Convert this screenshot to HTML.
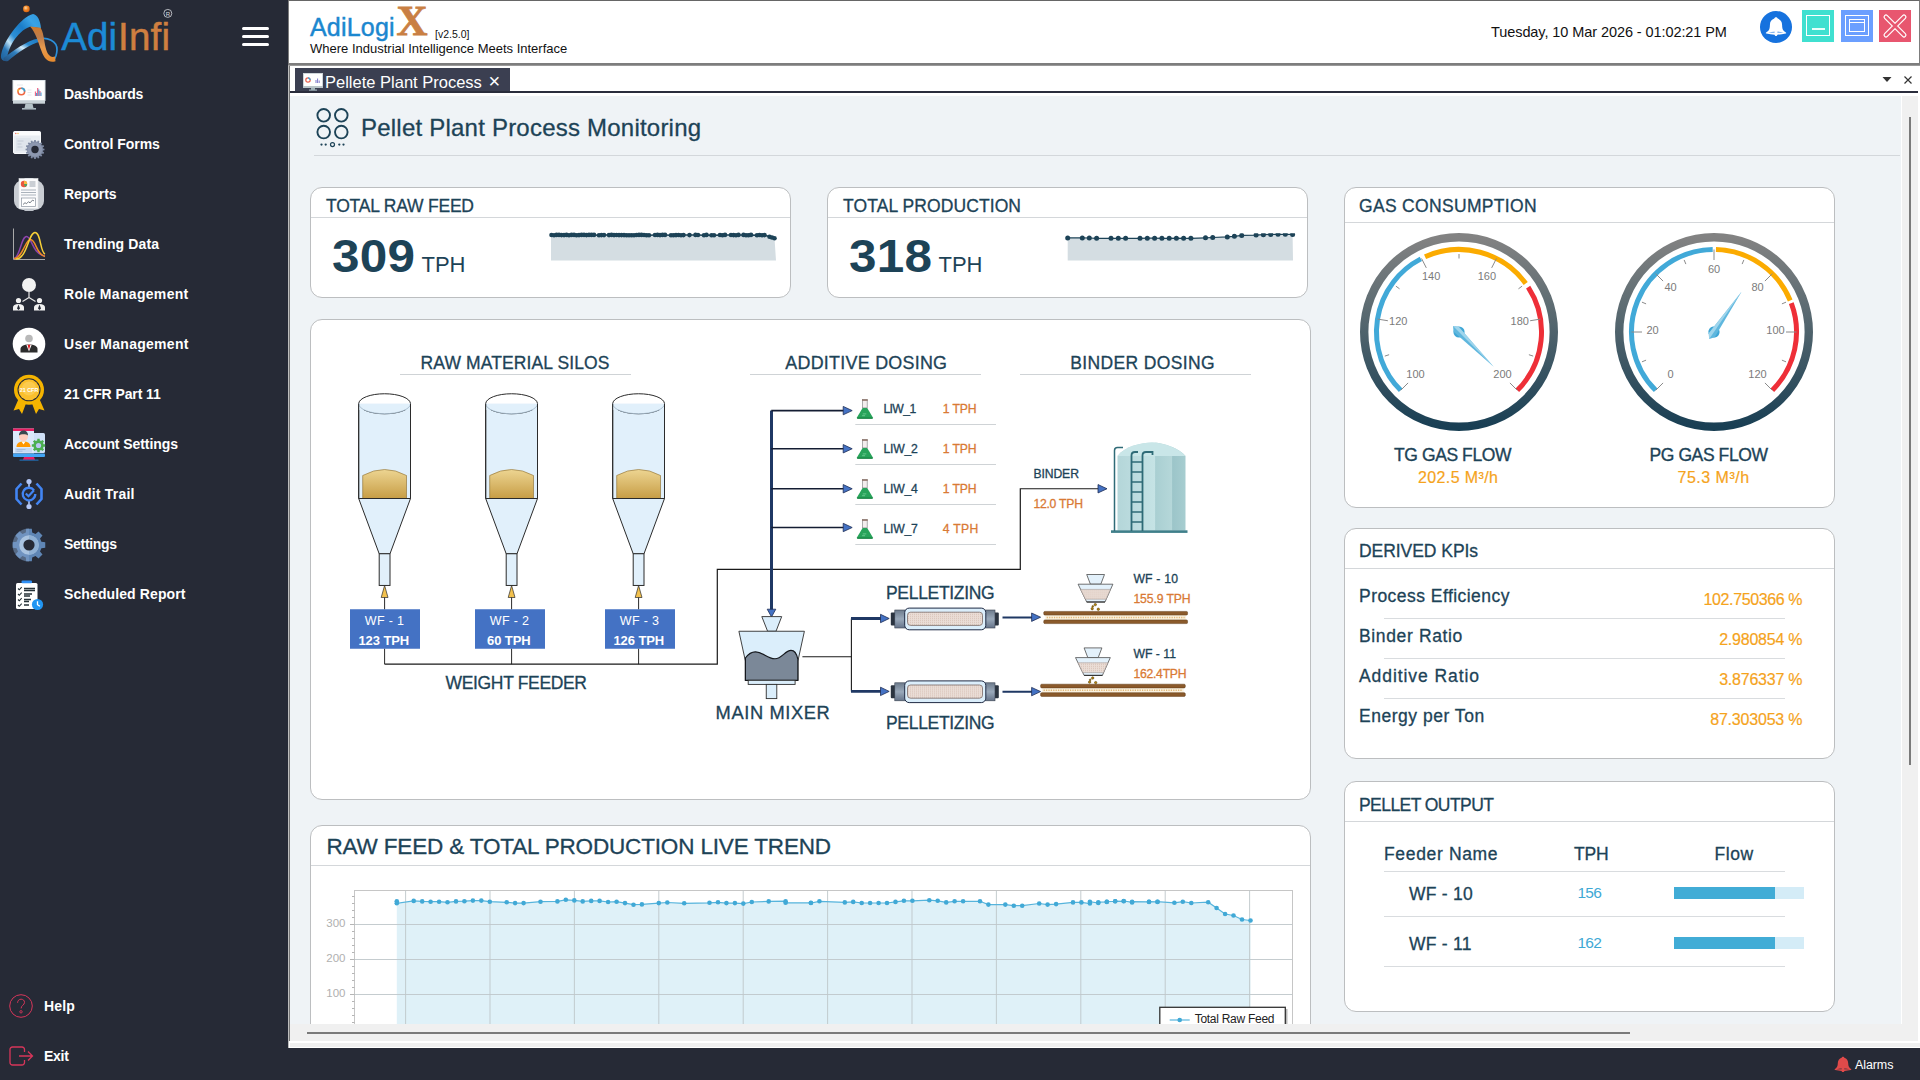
<!DOCTYPE html>
<html lang="en"><head><meta charset="utf-8"><title>AdiLogiX - Pellet Plant Process Monitoring</title>
<style>
*{box-sizing:border-box;margin:0;padding:0}
html,body{width:1920px;height:1080px;overflow:hidden;background:#fff;font-family:"Liberation Sans",sans-serif;color:#1d4357}
div,span,svg{position:absolute}
svg{overflow:visible}
svg text{font-family:"Liberation Sans",sans-serif}
.t{white-space:nowrap;line-height:1}
#side{left:0;top:0;width:288px;height:1080px;background:#262a36}
#status{left:288px;top:1048px;width:1632px;height:32px;background:#262a36}
.mi{left:64px;color:#fff;font-weight:bold;font-size:14px;white-space:nowrap;line-height:1}
#top{left:288px;top:0;width:1632px;height:65px;background:#fff;border:2px solid #7d7d7d;border-right-width:1px;border-left-width:1px;border-top:1px solid #666}
#tabs{left:288px;top:65px;width:1632px;height:983px;background:#fff;border-left:1px solid #bdbdbd;border-top:1px solid #9a9a9a;box-shadow:inset 1px 0 0 #757575}
#tab{left:295px;top:68px;width:215px;height:24px;background:#3b3f51}
#tabline{left:290px;top:91px;width:1628px;height:2px;background:#2a2d3c}
#content{left:290px;top:96px;width:1611px;height:928px;background:#eff3f6;overflow:hidden}
#vsb{left:1902px;top:96px;width:16px;height:946px;background:#f0f0f0}
#hsb{left:290px;top:1024px;width:1612px;height:18px;background:#f0f0f0}
.card{background:#fff;border:1px solid #bcbec0;border-radius:12px}
.ch{left:0;right:0;top:0;border-bottom:1px solid #d4d7da}
.ct{color:#1d4357;white-space:nowrap;line-height:1;-webkit-text-stroke:.3px #1d4357}
.or{color:#d97a35}
.ye{color:#f5a31c}
</style></head><body>

<!-- ============ TAB STRIP + CONTENT ============ -->
<div id="tabs"></div>
<div id="content"></div>

<svg style="left:314px;top:106px" width="38" height="44" viewBox="0 0 38 44">
  <g fill="none" stroke="#1d4357" stroke-width="1.900"><circle cx="9.700" cy="9.300" r="6.300"/><circle cx="27.300" cy="9.300" r="6.300"/><circle cx="9.700" cy="26.100" r="6.300"/><circle cx="27.300" cy="26.100" r="6.300"/></g>
  <circle cx="18.500" cy="38.600" r="2" fill="none" stroke="#1d4357" stroke-width="1.200"/>
  <g fill="#1d4357"><circle cx="7.500" cy="38.600" r="1.150"/><circle cx="11.700" cy="38.600" r="1.150"/><circle cx="25.300" cy="38.600" r="1.150"/><circle cx="29.500" cy="38.600" r="1.150"/></g>
</svg>
<div class="t" style="left:361px;top:115.600px;font-size:24px;color:#1d4357;letter-spacing:.22px;-webkit-text-stroke:.3px #1d4357">Pellet Plant Process Monitoring</div>
<div style="left:314px;top:155px;width:1586px;height:1px;background:#d3d7db"></div>
<div class="card" style="left:310px;top:187px;width:481px;height:111px"><div class="ch" style="height:30px"></div><div class="ct" style="left:15px;top:10px;font-size:17.5px;letter-spacing:-0.21px">TOTAL RAW FEED</div><div class="t" style="left:21px;top:44.900px;font-size:46px;font-weight:bold;color:#1d4357;letter-spacing:.2px;transform:scaleX(1.075);transform-origin:0 0">309</div><div class="t" style="left:110.500px;top:66.300px;font-size:22px;color:#1d4357">TPH</div></div>
<div class="card" style="left:827px;top:187px;width:481px;height:111px"><div class="ch" style="height:30px"></div><div class="ct" style="left:15px;top:10px;font-size:17.5px;letter-spacing:0.09px">TOTAL PRODUCTION</div><div class="t" style="left:21px;top:44.900px;font-size:46px;font-weight:bold;color:#1d4357;letter-spacing:.2px;transform:scaleX(1.075);transform-origin:0 0">318</div><div class="t" style="left:110.500px;top:66.300px;font-size:22px;color:#1d4357">TPH</div></div>
<svg style="left:0;top:0" width="1920" height="1080" viewBox="0 0 1920 1080">
<path d="M551 235 L551.5,235.0 L554.0,235.2 L556.5,234.9 L559.0,234.9 L561.5,235.1 L564.0,235.1 L566.5,234.9 L569.0,235.2 L571.5,234.9 L574.0,234.9 L576.5,235.2 L579.0,235.1 L581.5,234.9 L584.0,234.9 L586.5,235.1 L589.0,234.9 L591.5,234.9 L594.0,234.9 L599.0,235.2 L601.5,235.1 L604.0,235.1 L609.0,235.1 L611.5,234.9 L614.0,235.1 L616.5,235.0 L619.0,235.1 L621.5,235.1 L624.0,235.1 L626.5,235.2 L629.0,235.2 L631.5,235.2 L634.0,235.2 L636.5,235.0 L639.0,234.9 L641.5,234.9 L644.0,235.0 L646.5,235.2 L649.0,235.3 L655.0,235.0 L657.5,234.9 L660.0,235.1 L662.5,234.9 L665.0,234.9 L671.0,235.2 L673.5,235.3 L676.0,235.1 L678.5,235.0 L681.0,235.3 L683.5,235.1 L689.5,235.1 L695.5,234.9 L698.0,235.0 L704.0,235.3 L706.5,234.9 L711.5,235.3 L714.0,235.3 L720.0,235.0 L722.5,235.3 L725.0,234.9 L731.0,235.0 L733.5,235.1 L736.0,235.2 L738.5,234.9 L743.5,234.9 L746.0,235.2 L748.5,235.2 L751.0,234.9 L757.0,235.2 L759.5,235.0 L762.0,235.2 L764.5,235.1 L769.5,236.7 L772.0,237.5 L774.5,238.3 L776 260.600 L551 260.600 Z" fill="#d4dde2"/>
<polyline points="551.5,235.0 554.0,235.2 556.5,234.9 559.0,234.9 561.5,235.1 564.0,235.1 566.5,234.9 569.0,235.2 571.5,234.9 574.0,234.9 576.5,235.2 579.0,235.1 581.5,234.9 584.0,234.9 586.5,235.1 589.0,234.9 591.5,234.9 594.0,234.9 599.0,235.2 601.5,235.1 604.0,235.1 609.0,235.1 611.5,234.9 614.0,235.1 616.5,235.0 619.0,235.1 621.5,235.1 624.0,235.1 626.5,235.2 629.0,235.2 631.5,235.2 634.0,235.2 636.5,235.0 639.0,234.9 641.5,234.9 644.0,235.0 646.5,235.2 649.0,235.3 655.0,235.0 657.5,234.9 660.0,235.1 662.5,234.9 665.0,234.9 671.0,235.2 673.5,235.3 676.0,235.1 678.5,235.0 681.0,235.3 683.5,235.1 689.5,235.1 695.5,234.9 698.0,235.0 704.0,235.3 706.5,234.9 711.5,235.3 714.0,235.3 720.0,235.0 722.5,235.3 725.0,234.9 731.0,235.0 733.5,235.1 736.0,235.2 738.5,234.9 743.5,234.9 746.0,235.2 748.5,235.2 751.0,234.9 757.0,235.2 759.5,235.0 762.0,235.2 764.5,235.1 769.5,236.7 772.0,237.5 774.5,238.3" fill="none" stroke="#1d4357" stroke-width="1.500"/>
<g fill="#1d4357"><circle cx="551.5" cy="235.0" r="2.300"/><circle cx="554.0" cy="235.2" r="2.300"/><circle cx="556.5" cy="234.9" r="2.300"/><circle cx="559.0" cy="234.9" r="2.300"/><circle cx="561.5" cy="235.1" r="2.300"/><circle cx="564.0" cy="235.1" r="2.300"/><circle cx="566.5" cy="234.9" r="2.300"/><circle cx="569.0" cy="235.2" r="2.300"/><circle cx="571.5" cy="234.9" r="2.300"/><circle cx="574.0" cy="234.9" r="2.300"/><circle cx="576.5" cy="235.2" r="2.300"/><circle cx="579.0" cy="235.1" r="2.300"/><circle cx="581.5" cy="234.9" r="2.300"/><circle cx="584.0" cy="234.9" r="2.300"/><circle cx="586.5" cy="235.1" r="2.300"/><circle cx="589.0" cy="234.9" r="2.300"/><circle cx="591.5" cy="234.9" r="2.300"/><circle cx="594.0" cy="234.9" r="2.300"/><circle cx="599.0" cy="235.2" r="2.300"/><circle cx="601.5" cy="235.1" r="2.300"/><circle cx="604.0" cy="235.1" r="2.300"/><circle cx="609.0" cy="235.1" r="2.300"/><circle cx="611.5" cy="234.9" r="2.300"/><circle cx="614.0" cy="235.1" r="2.300"/><circle cx="616.5" cy="235.0" r="2.300"/><circle cx="619.0" cy="235.1" r="2.300"/><circle cx="621.5" cy="235.1" r="2.300"/><circle cx="624.0" cy="235.1" r="2.300"/><circle cx="626.5" cy="235.2" r="2.300"/><circle cx="629.0" cy="235.2" r="2.300"/><circle cx="631.5" cy="235.2" r="2.300"/><circle cx="634.0" cy="235.2" r="2.300"/><circle cx="636.5" cy="235.0" r="2.300"/><circle cx="639.0" cy="234.9" r="2.300"/><circle cx="641.5" cy="234.9" r="2.300"/><circle cx="644.0" cy="235.0" r="2.300"/><circle cx="646.5" cy="235.2" r="2.300"/><circle cx="649.0" cy="235.3" r="2.300"/><circle cx="655.0" cy="235.0" r="2.300"/><circle cx="657.5" cy="234.9" r="2.300"/><circle cx="660.0" cy="235.1" r="2.300"/><circle cx="662.5" cy="234.9" r="2.300"/><circle cx="665.0" cy="234.9" r="2.300"/><circle cx="671.0" cy="235.2" r="2.300"/><circle cx="673.5" cy="235.3" r="2.300"/><circle cx="676.0" cy="235.1" r="2.300"/><circle cx="678.5" cy="235.0" r="2.300"/><circle cx="681.0" cy="235.3" r="2.300"/><circle cx="683.5" cy="235.1" r="2.300"/><circle cx="689.5" cy="235.1" r="2.300"/><circle cx="695.5" cy="234.9" r="2.300"/><circle cx="698.0" cy="235.0" r="2.300"/><circle cx="704.0" cy="235.3" r="2.300"/><circle cx="706.5" cy="234.9" r="2.300"/><circle cx="711.5" cy="235.3" r="2.300"/><circle cx="714.0" cy="235.3" r="2.300"/><circle cx="720.0" cy="235.0" r="2.300"/><circle cx="722.5" cy="235.3" r="2.300"/><circle cx="725.0" cy="234.9" r="2.300"/><circle cx="731.0" cy="235.0" r="2.300"/><circle cx="733.5" cy="235.1" r="2.300"/><circle cx="736.0" cy="235.2" r="2.300"/><circle cx="738.5" cy="234.9" r="2.300"/><circle cx="743.5" cy="234.9" r="2.300"/><circle cx="746.0" cy="235.2" r="2.300"/><circle cx="748.5" cy="235.2" r="2.300"/><circle cx="751.0" cy="234.9" r="2.300"/><circle cx="757.0" cy="235.2" r="2.300"/><circle cx="759.5" cy="235.0" r="2.300"/><circle cx="762.0" cy="235.2" r="2.300"/><circle cx="764.5" cy="235.1" r="2.300"/><circle cx="769.5" cy="236.7" r="2.300"/><circle cx="772.0" cy="237.5" r="2.300"/><circle cx="774.5" cy="238.3" r="2.300"/></g>
<clipPath id="cp2"><rect x="1060" y="233.200" width="240" height="40"/></clipPath>
<g clip-path="url(#cp2)"><path d="M1067.7,237.9 L1082.3,237.9 L1089.3,238.0 L1096.6,238.3 L1111.0,238.3 L1118.3,238.3 L1125.6,238.3 L1140.0,238.3 L1147.3,238.2 L1154.6,238.2 L1161.9,238.3 L1169.2,238.3 L1176.4,238.2 L1183.6,238.3 L1190.9,238.3 L1205.5,237.8 L1212.7,237.5 L1227.3,236.9 L1234.4,236.3 L1241.7,235.4 L1256.1,235.1 L1263.4,234.7 L1270.7,234.4 L1278.0,234.3 L1285.3,234.3 L1292.6,234.4 L1293 260.600 L1067.700 260.600 Z" fill="#d4dde2"/>
<polyline points="1067.7,237.9 1082.3,237.9 1089.3,238.0 1096.6,238.3 1111.0,238.3 1118.3,238.3 1125.6,238.3 1140.0,238.3 1147.3,238.2 1154.6,238.2 1161.9,238.3 1169.2,238.3 1176.4,238.2 1183.6,238.3 1190.9,238.3 1205.5,237.8 1212.7,237.5 1227.3,236.9 1234.4,236.3 1241.7,235.4 1256.1,235.1 1263.4,234.7 1270.7,234.4 1278.0,234.3 1285.3,234.3 1292.6,234.4" fill="none" stroke="#1d4357" stroke-width="1.200"/>
<g fill="#1d4357"><circle cx="1067.7" cy="237.9" r="2.500"/><circle cx="1082.3" cy="237.9" r="2.500"/><circle cx="1089.3" cy="238.0" r="2.500"/><circle cx="1096.6" cy="238.3" r="2.500"/><circle cx="1111.0" cy="238.3" r="2.500"/><circle cx="1118.3" cy="238.3" r="2.500"/><circle cx="1125.6" cy="238.3" r="2.500"/><circle cx="1140.0" cy="238.3" r="2.500"/><circle cx="1147.3" cy="238.2" r="2.500"/><circle cx="1154.6" cy="238.2" r="2.500"/><circle cx="1161.9" cy="238.3" r="2.500"/><circle cx="1169.2" cy="238.3" r="2.500"/><circle cx="1176.4" cy="238.2" r="2.500"/><circle cx="1183.6" cy="238.3" r="2.500"/><circle cx="1190.9" cy="238.3" r="2.500"/><circle cx="1205.5" cy="237.8" r="2.500"/><circle cx="1212.7" cy="237.5" r="2.500"/><circle cx="1227.3" cy="236.9" r="2.500"/><circle cx="1234.4" cy="236.3" r="2.500"/><circle cx="1241.7" cy="235.4" r="2.500"/><circle cx="1256.1" cy="235.1" r="2.500"/><circle cx="1263.4" cy="234.7" r="2.500"/><circle cx="1270.7" cy="234.4" r="2.500"/><circle cx="1278.0" cy="234.3" r="2.500"/><circle cx="1285.3" cy="234.3" r="2.500"/><circle cx="1292.6" cy="234.4" r="2.500"/></g></g>
</svg>
<div class="card" style="left:310px;top:319px;width:1001px;height:481px"></div>
<svg style="left:0;top:0" width="1920" height="1080" viewBox="0 0 1920 1080">
<defs>
<linearGradient id="mat" x1="0" y1="0" x2="0" y2="1"><stop offset="0" stop-color="#edd592"/><stop offset="1" stop-color="#c79d45"/></linearGradient>
<linearGradient id="capg" x1="0" y1="0" x2="0" y2="1"><stop offset="0" stop-color="#6d7b8c"/><stop offset=".5" stop-color="#9aa9ba"/><stop offset="1" stop-color="#66748a"/></linearGradient>
<pattern id="hatch" width="2" height="2" patternUnits="userSpaceOnUse"><rect width="2" height="2" fill="#eaddd6"/><rect width="1" height="1" fill="#d9c3b8"/></pattern>
<pattern id="belt" width="3" height="3" patternUnits="userSpaceOnUse"><rect width="3" height="3" fill="#f6ead2"/><rect width="1.500" height="1.500" fill="#dcbf8d"/></pattern>
<linearGradient id="tank" x1="0" y1="0" x2="1" y2="0"><stop offset="0" stop-color="#b4d6d9"/><stop offset=".55" stop-color="#c5e3e5"/><stop offset=".56" stop-color="#a9cfd2"/><stop offset=".8" stop-color="#b5d7d9"/><stop offset=".81" stop-color="#9cc5c9"/><stop offset="1" stop-color="#a7cdd0"/></linearGradient>
</defs>
<text x="420.5" y="368.8" font-size="17.500" fill="#1d4357" stroke="#1d4357" stroke-width=".3" textLength="189.0" lengthAdjust="spacing">RAW MATERIAL SILOS</text>
<rect x="400" y="374" width="231.0" height="1" fill="#cfd3d6"/>
<text x="785.3" y="368.8" font-size="17.900" fill="#1d4357" stroke="#1d4357" stroke-width=".3" textLength="161.7" lengthAdjust="spacing">ADDITIVE DOSING</text>
<rect x="750" y="374" width="231.0" height="1" fill="#cfd3d6"/>
<text x="1070.3" y="368.8" font-size="17.500" fill="#1d4357" stroke="#1d4357" stroke-width=".3" textLength="144.4" lengthAdjust="spacing">BINDER DOSING</text>
<rect x="1020" y="374" width="231.0" height="1" fill="#cfd3d6"/>
<text x="445.5" y="688.8" font-size="17.500" fill="#1d4357" stroke="#1d4357" stroke-width=".3" textLength="141.5" lengthAdjust="spacing">WEIGHT FEEDER</text>
<text x="715.6" y="718.8" font-size="18.300" fill="#1d4357" stroke="#1d4357" stroke-width=".3" textLength="114.1" lengthAdjust="spacing">MAIN MIXER</text>
<text x="886" y="599" font-size="17.500" fill="#1d4357" stroke="#1d4357" stroke-width=".3" textLength="108.7" lengthAdjust="spacing">PELLETIZING</text>
<text x="886" y="729" font-size="17.500" fill="#1d4357" stroke="#1d4357" stroke-width=".3" textLength="108.7" lengthAdjust="spacing">PELLETIZING</text>
<g stroke="#2b2b2b" stroke-width="1">
<path d="M358.70000000000005 403.750V498.500H410.5V403.750Z" fill="#e1f0fb"/>
<ellipse cx="384.6" cy="403.750" rx="25.900" ry="10" fill="#fff"/>
<path d="M358.70000000000005 403.750V410H410.5V403.750" fill="#e1f0fb" stroke="none"/>
<path d="M358.70000000000005 403.750A25.900 10 0 0 0 410.5 403.750" fill="#e1f0fb" stroke="#9db3c4" stroke-width=".8"/>
<path d="M358.70000000000005 403.750V498.500M410.5 403.750V498.500" fill="none"/>
<path d="M362.70000000000005 498.500V475.500Q384.6 463.500 406.5 475.500V498.500Z" fill="url(#mat)" stroke="#8a6a2a" stroke-width=".6"/>
<path d="M358.70000000000005 498.500H410.5L390.0 553.750H379.20000000000005Z" fill="#e1f0fb"/>
<rect x="379.20000000000005" y="553.750" width="10.800" height="31.700" fill="#e1f0fb"/>
<path d="M384.6 585.500L388.0 597.500H381.20000000000005Z" fill="#f2c14e" stroke-width=".7"/>
<path d="M384.6 597.500V609.500M384.6 648.500V664.200" fill="none"/>
</g>
<g stroke="#2b2b2b" stroke-width="1">
<path d="M485.70000000000005 403.750V498.500H537.5V403.750Z" fill="#e1f0fb"/>
<ellipse cx="511.6" cy="403.750" rx="25.900" ry="10" fill="#fff"/>
<path d="M485.70000000000005 403.750V410H537.5V403.750" fill="#e1f0fb" stroke="none"/>
<path d="M485.70000000000005 403.750A25.900 10 0 0 0 537.5 403.750" fill="#e1f0fb" stroke="#9db3c4" stroke-width=".8"/>
<path d="M485.70000000000005 403.750V498.500M537.5 403.750V498.500" fill="none"/>
<path d="M489.70000000000005 498.500V475.500Q511.6 463.500 533.5 475.500V498.500Z" fill="url(#mat)" stroke="#8a6a2a" stroke-width=".6"/>
<path d="M485.70000000000005 498.500H537.5L517.0 553.750H506.20000000000005Z" fill="#e1f0fb"/>
<rect x="506.20000000000005" y="553.750" width="10.800" height="31.700" fill="#e1f0fb"/>
<path d="M511.6 585.500L515.0 597.500H508.20000000000005Z" fill="#f2c14e" stroke-width=".7"/>
<path d="M511.6 597.500V609.500M511.6 648.500V664.200" fill="none"/>
</g>
<g stroke="#2b2b2b" stroke-width="1">
<path d="M612.7 403.750V498.500H664.5V403.750Z" fill="#e1f0fb"/>
<ellipse cx="638.6" cy="403.750" rx="25.900" ry="10" fill="#fff"/>
<path d="M612.7 403.750V410H664.5V403.750" fill="#e1f0fb" stroke="none"/>
<path d="M612.7 403.750A25.900 10 0 0 0 664.5 403.750" fill="#e1f0fb" stroke="#9db3c4" stroke-width=".8"/>
<path d="M612.7 403.750V498.500M664.5 403.750V498.500" fill="none"/>
<path d="M616.7 498.500V475.500Q638.6 463.500 660.5 475.500V498.500Z" fill="url(#mat)" stroke="#8a6a2a" stroke-width=".6"/>
<path d="M612.7 498.500H664.5L644.0 553.750H633.2Z" fill="#e1f0fb"/>
<rect x="633.2" y="553.750" width="10.800" height="31.700" fill="#e1f0fb"/>
<path d="M638.6 585.500L642.0 597.500H635.2Z" fill="#f2c14e" stroke-width=".7"/>
<path d="M638.6 597.500V609.500M638.6 648.500V664.200" fill="none"/>
</g>
<rect x="350" y="609.250" width="70" height="39.500" fill="#4472c4"/>
<text x="384.5" y="625" font-size="12.500" fill="#fff" text-anchor="middle" letter-spacing=".3">WF - 1</text>
<text x="383.8" y="645" font-size="13" font-weight="bold" fill="#fff" text-anchor="middle" letter-spacing="-.1">123 TPH</text>
<rect x="475" y="609.250" width="70" height="39.500" fill="#4472c4"/>
<text x="509.5" y="625" font-size="12.500" fill="#fff" text-anchor="middle" letter-spacing=".3">WF - 2</text>
<text x="508.8" y="645" font-size="13" font-weight="bold" fill="#fff" text-anchor="middle" letter-spacing="-.1">60 TPH</text>
<rect x="605" y="609.250" width="70" height="39.500" fill="#4472c4"/>
<text x="639.5" y="625" font-size="12.500" fill="#fff" text-anchor="middle" letter-spacing=".3">WF - 3</text>
<text x="638.8" y="645" font-size="13" font-weight="bold" fill="#fff" text-anchor="middle" letter-spacing="-.1">126 TPH</text>
<path d="M384.600 664.200H717.300V569.400H1020.300V488.750H1099" fill="none" stroke="#1a1a1a" stroke-width="1.200"/>
<path d="M771.500 410.600V610" fill="none" stroke="#1f3864" stroke-width="3"/>
<path d="M771.250 410.6H844" fill="none" stroke="#141d33" stroke-width="1.600"/>
<path d="M852.2 410.6L843.2 406.40000000000003V414.8Z" fill="#4472c4" stroke="#1f2f55" stroke-width=".8"/>
<path d="M771.250 448.75H844" fill="none" stroke="#141d33" stroke-width="1.600"/>
<path d="M852.2 448.75L843.2 444.55V452.95Z" fill="#4472c4" stroke="#1f2f55" stroke-width=".8"/>
<path d="M771.250 488.75H844" fill="none" stroke="#141d33" stroke-width="1.600"/>
<path d="M852.2 488.75L843.2 484.55V492.95Z" fill="#4472c4" stroke="#1f2f55" stroke-width=".8"/>
<path d="M771.250 527.5H844" fill="none" stroke="#141d33" stroke-width="1.600"/>
<path d="M852.2 527.5L843.2 523.3V531.7Z" fill="#4472c4" stroke="#1f2f55" stroke-width=".8"/>
<path d="M771.500 616.900L767.200 609.200H775.800Z" fill="#4472c4" stroke="#1f2f55" stroke-width=".8"/>
<path d="M1107 488.75L1098.0 484.55V492.95Z" fill="#4472c4" stroke="#1f2f55" stroke-width=".8"/>
<g transform="translate(856.300 399.4)"><rect x="6.300" y="0" width="4.600" height="8.500" fill="#f3eeee" stroke="#8b8b8b" stroke-width=".7"/><rect x="5.800" y="0" width="5.600" height="1.400" fill="#8d6e63"/><path d="M6.300 8.500L.6 18.200Q.2 19.400 1.500 19.400H15.700Q17 19.400 16.600 18.200L10.900 8.500Z" fill="#27a35a"/><path d="M1 18.700H16.200" stroke="#157a3e" stroke-width="1"/><path d="M6.500 14.500h3.500M5.800 16.300h3" stroke="#7fd6a0" stroke-width=".7"/></g>
<text x="883.400" y="413.4" font-size="12.2" fill="#1d4357" stroke="#1d4357" stroke-width=".3" letter-spacing="-0.61">LIW_1</text>
<text x="942.800" y="413.4" font-size="12.2" fill="#d97a35" stroke="#d97a35" stroke-width=".3" letter-spacing="-0.14">1 TPH</text>
<rect x="855.300" y="424" width="140.700" height="1" fill="#cfd3d6"/>
<g transform="translate(856.300 439.4)"><rect x="6.300" y="0" width="4.600" height="8.500" fill="#f3eeee" stroke="#8b8b8b" stroke-width=".7"/><rect x="5.800" y="0" width="5.600" height="1.400" fill="#8d6e63"/><path d="M6.300 8.500L.6 18.200Q.2 19.400 1.500 19.400H15.700Q17 19.400 16.600 18.200L10.900 8.500Z" fill="#27a35a"/><path d="M1 18.700H16.200" stroke="#157a3e" stroke-width="1"/><path d="M6.500 14.500h3.500M5.800 16.300h3" stroke="#7fd6a0" stroke-width=".7"/></g>
<text x="883.400" y="453.4" font-size="12.2" fill="#1d4357" stroke="#1d4357" stroke-width=".3" letter-spacing="-0.19">LIW_2</text>
<text x="942.800" y="453.4" font-size="12.2" fill="#d97a35" stroke="#d97a35" stroke-width=".3" letter-spacing="-0.14">1 TPH</text>
<rect x="855.300" y="464" width="140.700" height="1" fill="#cfd3d6"/>
<g transform="translate(856.300 479.4)"><rect x="6.300" y="0" width="4.600" height="8.500" fill="#f3eeee" stroke="#8b8b8b" stroke-width=".7"/><rect x="5.800" y="0" width="5.600" height="1.400" fill="#8d6e63"/><path d="M6.300 8.500L.6 18.200Q.2 19.400 1.500 19.400H15.700Q17 19.400 16.600 18.200L10.900 8.500Z" fill="#27a35a"/><path d="M1 18.700H16.200" stroke="#157a3e" stroke-width="1"/><path d="M6.500 14.500h3.500M5.800 16.300h3" stroke="#7fd6a0" stroke-width=".7"/></g>
<text x="883.400" y="493.4" font-size="12.2" fill="#1d4357" stroke="#1d4357" stroke-width=".3" letter-spacing="-0.19">LIW_4</text>
<text x="942.800" y="493.4" font-size="12.2" fill="#d97a35" stroke="#d97a35" stroke-width=".3" letter-spacing="-0.14">1 TPH</text>
<rect x="855.300" y="504" width="140.700" height="1" fill="#cfd3d6"/>
<g transform="translate(856.300 519.4)"><rect x="6.300" y="0" width="4.600" height="8.500" fill="#f3eeee" stroke="#8b8b8b" stroke-width=".7"/><rect x="5.800" y="0" width="5.600" height="1.400" fill="#8d6e63"/><path d="M6.300 8.500L.6 18.200Q.2 19.400 1.500 19.400H15.700Q17 19.400 16.600 18.200L10.900 8.500Z" fill="#27a35a"/><path d="M1 18.700H16.200" stroke="#157a3e" stroke-width="1"/><path d="M6.500 14.500h3.500M5.800 16.300h3" stroke="#7fd6a0" stroke-width=".7"/></g>
<text x="883.400" y="533.4" font-size="12.2" fill="#1d4357" stroke="#1d4357" stroke-width=".3" letter-spacing="-0.19">LIW_7</text>
<text x="942.800" y="533.4" font-size="12.2" fill="#d97a35" stroke="#d97a35" stroke-width=".3" letter-spacing="0.31">4 TPH</text>
<rect x="855.300" y="544" width="140.700" height="1" fill="#cfd3d6"/>
<text x="1033.400" y="477.800" font-size="12.2" fill="#1d4357" stroke="#1d4357" stroke-width=".3" letter-spacing="-0.10">BINDER</text>
<text x="1033.400" y="508" font-size="12.2" fill="#d97a35" stroke="#d97a35" stroke-width=".3" letter-spacing="-0.24">12.0 TPH</text>
<g>
<path d="M1117.500 456C1125 446 1142 442.500 1152 442.500C1165 442.500 1180 449 1185.500 456V530.500H1117.500Z" fill="url(#tank)"/>
<path d="M1117.500 456C1125 446 1142 442.500 1152 442.500C1165 442.500 1180 449 1185.500 456Z" fill="#c9e6e8"/>
<rect x="1111" y="530.300" width="76.500" height="2.600" fill="#3f7f8a"/>
<path d="M1114.500 531V450.500Q1114.500 447.500 1117.500 447.500H1123" fill="none" stroke="#2f6b77" stroke-width="1.500"/>
<path d="M1131.500 531V455.500Q1131.500 452 1135 452H1138M1142.500 531V455.500Q1142.500 452 1146 452H1152.500V455" fill="none" stroke="#2f6b77" stroke-width="1.800"/>
<path d="M1131.500 462H1142.500M1131.500 472H1142.500M1131.500 482H1142.500M1131.500 492H1142.500M1131.500 502H1142.500M1131.500 512H1142.500M1131.500 522H1142.500" stroke="#2f6b77" stroke-width="1.600"/>
</g>
<g stroke="#2e2e2e" stroke-width=".9">
<path d="M761.800 616.600H781.700L776 631.250H767.600Z" fill="#dbeefb"/>
<path d="M738.900 631.250H804.400L797.900 661V680.300H745.400V661Z" fill="#dbeefb"/>
<path d="M745.400 658C749 653 752 651.800 755.500 651.800C763 651.800 767 658.750 775 658.750C782 658.750 785 650.400 791 650.400C795 650.400 797 655 797.900 659.400V680.300H745.400Z" fill="#7b8898" stroke="#15181d" stroke-width="1.200"/>
<rect x="748.200" y="680.300" width="46.900" height="4.100" fill="#dbeefb"/>
<rect x="766.250" y="684.400" width="10.550" height="14.200" fill="#dbeefb"/>
</g>
<path d="M802.400 656.700H851.400" fill="none" stroke="#1a1a1a" stroke-width="1.100"/>
<path d="M851.400 618.500V691.400" fill="none" stroke="#1a1a1a" stroke-width="1.100"/><path d="M851 618.500H881M851 691.400H881" fill="none" stroke="#1f3864" stroke-width="2.800"/>
<path d="M889.200 618.500L880.500 614.300V622.700Z" fill="#4472c4" stroke="#1f2f55" stroke-width=".8"/>
<path d="M889.200 691.400L880.500 687.200V695.600Z" fill="#4472c4" stroke="#1f2f55" stroke-width=".8"/>
<g transform="translate(0 607.8)"><rect x="890.800" y="4.700" width="5" height="13" rx="1" fill="#2b3440"/><rect x="993.800" y="4.700" width="5" height="13" rx="1" fill="#2b3440"/><rect x="894.800" y="2.200" width="11" height="18" fill="url(#capg)" stroke="#39424f" stroke-width=".6"/><rect x="984.500" y="2.200" width="10.500" height="18" fill="url(#capg)" stroke="#39424f" stroke-width=".6"/><rect x="904.700" y=".3" width="81.100" height="21.700" rx="4.500" fill="#dbeefb" stroke="#1f2a44" stroke-width="1"/><rect x="907.500" y="4.400" width="75" height="13.200" rx="3" fill="url(#hatch)" stroke="#7a6a66" stroke-width=".8"/></g>
<g transform="translate(0 680.6)"><rect x="890.800" y="4.700" width="5" height="13" rx="1" fill="#2b3440"/><rect x="993.800" y="4.700" width="5" height="13" rx="1" fill="#2b3440"/><rect x="894.800" y="2.200" width="11" height="18" fill="url(#capg)" stroke="#39424f" stroke-width=".6"/><rect x="984.500" y="2.200" width="10.500" height="18" fill="url(#capg)" stroke="#39424f" stroke-width=".6"/><rect x="904.700" y=".3" width="81.100" height="21.700" rx="4.500" fill="#dbeefb" stroke="#1f2a44" stroke-width="1"/><rect x="907.500" y="4.400" width="75" height="13.200" rx="3" fill="url(#hatch)" stroke="#7a6a66" stroke-width=".8"/></g>
<path d="M1002.500 617.400H1032M1002.500 691.700H1032" fill="none" stroke="#1f3864" stroke-width="2"/>
<path d="M1040.6 617.2L1031.6 613.0V621.4000000000001Z" fill="#4472c4" stroke="#1f2f55" stroke-width=".8"/>
<path d="M1040.6 691.6L1031.6 687.4V695.8000000000001Z" fill="#4472c4" stroke="#1f2f55" stroke-width=".8"/>
<rect x="1045.35" y="614.6" width="140.6" height="6" fill="#fbf2df"/><path d="M1046.75 617.5H1184.55" stroke="#e2b777" stroke-width="1.600" stroke-dasharray="1.200 1.200"/><rect x="1043.75" y="611.4" width="143.8" height="3.700" rx="1.200" fill="#8b5a2b" stroke="#5e3a17" stroke-width=".5"/><rect x="1043.75" y="619.9" width="143.8" height="3.700" rx="1.200" fill="#8b5a2b" stroke="#5e3a17" stroke-width=".5"/>
<rect x="1042.1999999999998" y="687.4" width="141.5" height="6" fill="#fbf2df"/><path d="M1043.6 690.3H1182.3" stroke="#e2b777" stroke-width="1.600" stroke-dasharray="1.200 1.200"/><rect x="1040.6" y="684.1999999999999" width="144.7" height="3.700" rx="1.200" fill="#8b5a2b" stroke="#5e3a17" stroke-width=".5"/><rect x="1040.6" y="692.6999999999999" width="144.7" height="3.700" rx="1.200" fill="#8b5a2b" stroke="#5e3a17" stroke-width=".5"/>
<g transform="translate(1095.6 574.4)" stroke="#4d4d4d" stroke-width=".8"><path d="M-8.900 .1H8.900L5.200 9.800H-5.200Z" fill="#e3f1fb"/><path d="M-17.500 9.800H17.300L9.400 27.600H-8.900Z" fill="#e3f1fb"/><path d="M-15 15H14.800L10.500 24.800H-10.200Z" fill="url(#hatch)" stroke="#9a8f8a" stroke-width=".5"/><path d="M-8.900 27.600H9.400" stroke="#333" stroke-width="1.100"/><g fill="#b8860b" stroke="#4a3500" stroke-width=".5"><circle cx="-.3" cy="30.200" r="1.200"/><circle cx="-3.400" cy="34.300" r="1.200"/><circle cx="2.700" cy="34.800" r="1.200"/><circle cx="-2.800" cy="32" r=".9"/></g></g>
<g transform="translate(1093 647.8)" stroke="#4d4d4d" stroke-width=".8"><path d="M-8.900 .1H8.900L5.200 9.800H-5.200Z" fill="#e3f1fb"/><path d="M-17.500 9.800H17.300L9.400 27.600H-8.900Z" fill="#e3f1fb"/><path d="M-15 15H14.800L10.500 24.800H-10.200Z" fill="url(#hatch)" stroke="#9a8f8a" stroke-width=".5"/><path d="M-8.900 27.600H9.400" stroke="#333" stroke-width="1.100"/><g fill="#b8860b" stroke="#4a3500" stroke-width=".5"><circle cx="-.3" cy="30.200" r="1.200"/><circle cx="-3.400" cy="34.300" r="1.200"/><circle cx="2.700" cy="34.800" r="1.200"/><circle cx="-2.800" cy="32" r=".9"/></g></g>
<text x="1133.400" y="583.400" font-size="12.2" fill="#1d4357" stroke="#1d4357" stroke-width=".3" letter-spacing="0.20">WF - 10</text>
<text x="1133.400" y="603" font-size="12.2" fill="#d97a35" stroke="#d97a35" stroke-width=".3" letter-spacing="-0.11">155.9 TPH</text>
<text x="1133.400" y="658.400" font-size="12.2" fill="#1d4357" stroke="#1d4357" stroke-width=".3" letter-spacing="0.02">WF - 11</text>
<text x="1133.400" y="678" font-size="12.2" fill="#d97a35" stroke="#d97a35" stroke-width=".3" letter-spacing="-0.25">162.4TPH</text>
</svg>

<div class="card" style="left:310px;top:825px;width:1001px;height:260px"><div class="ch" style="height:40px"></div><div class="ct" style="left:15.5px;top:10.2px;font-size:22.5px;letter-spacing:-0.16px">RAW FEED &amp; TOTAL PRODUCTION LIVE TREND</div></div>
<svg style="left:0;top:0" width="1920" height="1080" viewBox="0 0 1920 1080">
<rect x="354.500" y="890.500" width="938" height="140" fill="#fff" stroke="#c6c6c6" stroke-width="1"/>
<path d="M396.8 1030 L396.8 901.2 L396.8 903.3 L413.7 900.9 L422.2 901.4 L430.6 901.7 L439.1 901.7 L447.5 902.3 L456.0 901.4 L464.4 901.2 L472.9 900.6 L481.3 900.6 L489.8 901.7 L506.7 902.3 L515.1 903.1 L523.6 903.1 L540.5 901.7 L557.4 901.4 L565.8 899.8 L574.3 900.4 L582.7 901.4 L591.2 900.9 L599.6 900.9 L608.1 902.0 L616.6 901.7 L625.0 903.1 L633.5 904.7 L641.9 904.4 L658.8 903.1 L667.3 902.5 L684.2 903.3 L709.5 902.8 L718.0 902.3 L726.4 903.1 L734.9 903.1 L743.3 903.6 L751.8 902.0 L768.7 901.4 L785.6 901.2 L785.6 902.8 L810.9 902.8 L810.9 903.0 L819.4 901.3 L844.8 902.4 L853.2 901.9 L861.7 903.0 L870.1 903.0 L878.6 903.0 L887.0 903.0 L895.5 901.9 L903.9 900.8 L912.4 900.8 L929.3 900.2 L937.7 900.8 L946.2 902.4 L954.6 901.3 L963.1 901.3 L980.0 901.3 L988.4 904.6 L1005.3 904.6 L1013.8 905.7 L1022.2 905.7 L1039.2 903.5 L1047.6 904.6 L1056.1 904.1 L1073.0 902.4 L1081.4 902.4 L1089.9 903.5 L1089.9 901.7 L1098.3 903.0 L1098.3 902.2 L1106.8 901.9 L1106.8 901.7 L1115.2 901.3 L1115.2 901.2 L1123.7 901.3 L1123.7 901.0 L1132.1 902.4 L1132.1 901.7 L1149.0 901.9 L1149.0 901.7 L1157.5 901.9 L1157.5 901.7 L1174.4 902.8 L1182.8 901.7 L1191.3 903.0 L1208.2 902.2 L1216.6 908.0 L1225.1 914.0 L1233.5 915.5 L1242.0 919.5 L1250.5 920.5 L1250.5 1030Z" fill="#dff1f8"/>
<path d="M405.6 890.500V1030M490.0 890.500V1030M574.4 890.500V1030M658.8 890.500V1030M743.2 890.500V1030M827.6 890.500V1030M912.0 890.500V1030M996.4 890.500V1030M1080.8 890.500V1030M1165.2 890.500V1030M1249.6 890.500V1030M354.500 924.5H1292.500M354.500 959.5H1292.500M354.500 994.5H1292.500" stroke="#bfc7ca" stroke-width="1" fill="none" opacity=".9"/>
<path d="M350 1029.5H354.500M352 1022.5H354.500M352 1015.5H354.500M352 1008.5H354.500M352 1001.5H354.500M350 994.5H354.500M352 987.5H354.500M352 980.5H354.500M352 973.5H354.500M352 966.5H354.500M350 959.5H354.500M352 952.5H354.500M352 945.5H354.500M352 938.5H354.500M352 931.5H354.500M350 924.5H354.500M352 917.5H354.500M352 910.5H354.500M352 903.5H354.500M352 896.5H354.500" stroke="#b5b5b5" stroke-width="1" fill="none"/>
<text x="345.500" y="927.4" font-size="11.500" fill="#b0b0b0" text-anchor="end">300</text>
<text x="345.500" y="962.4" font-size="11.500" fill="#b0b0b0" text-anchor="end">200</text>
<text x="345.500" y="997.4" font-size="11.500" fill="#b0b0b0" text-anchor="end">100</text>
<polyline points="396.8,901.2 396.8,903.3 413.7,900.9 422.2,901.4 430.6,901.7 439.1,901.7 447.5,902.3 456.0,901.4 464.4,901.2 472.9,900.6 481.3,900.6 489.8,901.7 506.7,902.3 515.1,903.1 523.6,903.1 540.5,901.7 557.4,901.4 565.8,899.8 574.3,900.4 582.7,901.4 591.2,900.9 599.6,900.9 608.1,902.0 616.6,901.7 625.0,903.1 633.5,904.7 641.9,904.4 658.8,903.1 667.3,902.5 684.2,903.3 709.5,902.8 718.0,902.3 726.4,903.1 734.9,903.1 743.3,903.6 751.8,902.0 768.7,901.4 785.6,901.2 785.6,902.8 810.9,902.8 810.9,903.0 819.4,901.3 844.8,902.4 853.2,901.9 861.7,903.0 870.1,903.0 878.6,903.0 887.0,903.0 895.5,901.9 903.9,900.8 912.4,900.8 929.3,900.2 937.7,900.8 946.2,902.4 954.6,901.3 963.1,901.3 980.0,901.3 988.4,904.6 1005.3,904.6 1013.8,905.7 1022.2,905.7 1039.2,903.5 1047.6,904.6 1056.1,904.1 1073.0,902.4 1081.4,902.4 1089.9,903.5 1089.9,901.7 1098.3,903.0 1098.3,902.2 1106.8,901.9 1106.8,901.7 1115.2,901.3 1115.2,901.2 1123.7,901.3 1123.7,901.0 1132.1,902.4 1132.1,901.7 1149.0,901.9 1149.0,901.7 1157.5,901.9 1157.5,901.7 1174.4,902.8 1182.8,901.7 1191.3,903.0 1208.2,902.2 1216.6,908.0 1225.1,914.0 1233.5,915.5 1242.0,919.5 1250.5,920.5" fill="none" stroke="#56b4dc" stroke-width="1.200"/>
<g fill="#41a9d6"><circle cx="396.8" cy="901.2" r="2.300"/><circle cx="396.8" cy="903.3" r="2.300"/><circle cx="413.7" cy="900.9" r="2.300"/><circle cx="422.2" cy="901.4" r="2.300"/><circle cx="430.6" cy="901.7" r="2.300"/><circle cx="439.1" cy="901.7" r="2.300"/><circle cx="447.5" cy="902.3" r="2.300"/><circle cx="456.0" cy="901.4" r="2.300"/><circle cx="464.4" cy="901.2" r="2.300"/><circle cx="472.9" cy="900.6" r="2.300"/><circle cx="481.3" cy="900.6" r="2.300"/><circle cx="489.8" cy="901.7" r="2.300"/><circle cx="506.7" cy="902.3" r="2.300"/><circle cx="515.1" cy="903.1" r="2.300"/><circle cx="523.6" cy="903.1" r="2.300"/><circle cx="540.5" cy="901.7" r="2.300"/><circle cx="557.4" cy="901.4" r="2.300"/><circle cx="565.8" cy="899.8" r="2.300"/><circle cx="574.3" cy="900.4" r="2.300"/><circle cx="582.7" cy="901.4" r="2.300"/><circle cx="591.2" cy="900.9" r="2.300"/><circle cx="599.6" cy="900.9" r="2.300"/><circle cx="608.1" cy="902.0" r="2.300"/><circle cx="616.6" cy="901.7" r="2.300"/><circle cx="625.0" cy="903.1" r="2.300"/><circle cx="633.5" cy="904.7" r="2.300"/><circle cx="641.9" cy="904.4" r="2.300"/><circle cx="658.8" cy="903.1" r="2.300"/><circle cx="667.3" cy="902.5" r="2.300"/><circle cx="684.2" cy="903.3" r="2.300"/><circle cx="709.5" cy="902.8" r="2.300"/><circle cx="718.0" cy="902.3" r="2.300"/><circle cx="726.4" cy="903.1" r="2.300"/><circle cx="734.9" cy="903.1" r="2.300"/><circle cx="743.3" cy="903.6" r="2.300"/><circle cx="751.8" cy="902.0" r="2.300"/><circle cx="768.7" cy="901.4" r="2.300"/><circle cx="785.6" cy="901.2" r="2.300"/><circle cx="785.6" cy="902.8" r="2.300"/><circle cx="810.9" cy="902.8" r="2.300"/><circle cx="810.9" cy="903.0" r="2.300"/><circle cx="819.4" cy="901.3" r="2.300"/><circle cx="844.8" cy="902.4" r="2.300"/><circle cx="853.2" cy="901.9" r="2.300"/><circle cx="861.7" cy="903.0" r="2.300"/><circle cx="870.1" cy="903.0" r="2.300"/><circle cx="878.6" cy="903.0" r="2.300"/><circle cx="887.0" cy="903.0" r="2.300"/><circle cx="895.5" cy="901.9" r="2.300"/><circle cx="903.9" cy="900.8" r="2.300"/><circle cx="912.4" cy="900.8" r="2.300"/><circle cx="929.3" cy="900.2" r="2.300"/><circle cx="937.7" cy="900.8" r="2.300"/><circle cx="946.2" cy="902.4" r="2.300"/><circle cx="954.6" cy="901.3" r="2.300"/><circle cx="963.1" cy="901.3" r="2.300"/><circle cx="980.0" cy="901.3" r="2.300"/><circle cx="988.4" cy="904.6" r="2.300"/><circle cx="1005.3" cy="904.6" r="2.300"/><circle cx="1013.8" cy="905.7" r="2.300"/><circle cx="1022.2" cy="905.7" r="2.300"/><circle cx="1039.2" cy="903.5" r="2.300"/><circle cx="1047.6" cy="904.6" r="2.300"/><circle cx="1056.1" cy="904.1" r="2.300"/><circle cx="1073.0" cy="902.4" r="2.300"/><circle cx="1081.4" cy="902.4" r="2.300"/><circle cx="1089.9" cy="903.5" r="2.300"/><circle cx="1089.9" cy="901.7" r="2.300"/><circle cx="1098.3" cy="903.0" r="2.300"/><circle cx="1098.3" cy="902.2" r="2.300"/><circle cx="1106.8" cy="901.9" r="2.300"/><circle cx="1106.8" cy="901.7" r="2.300"/><circle cx="1115.2" cy="901.3" r="2.300"/><circle cx="1115.2" cy="901.2" r="2.300"/><circle cx="1123.7" cy="901.3" r="2.300"/><circle cx="1123.7" cy="901.0" r="2.300"/><circle cx="1132.1" cy="902.4" r="2.300"/><circle cx="1132.1" cy="901.7" r="2.300"/><circle cx="1149.0" cy="901.9" r="2.300"/><circle cx="1149.0" cy="901.7" r="2.300"/><circle cx="1157.5" cy="901.9" r="2.300"/><circle cx="1157.5" cy="901.7" r="2.300"/><circle cx="1174.4" cy="902.8" r="2.300"/><circle cx="1182.8" cy="901.7" r="2.300"/><circle cx="1191.3" cy="903.0" r="2.300"/><circle cx="1208.2" cy="902.2" r="2.300"/><circle cx="1216.6" cy="908.0" r="2.300"/><circle cx="1225.1" cy="914.0" r="2.300"/><circle cx="1233.5" cy="915.5" r="2.300"/><circle cx="1242.0" cy="919.5" r="2.300"/><circle cx="1250.5" cy="920.5" r="2.300"/></g>
<rect x="1161.500" y="1009" width="126" height="30" fill="#b9b9b9"/>
<rect x="1159.800" y="1007.300" width="125.500" height="30" fill="#fff" stroke="#333" stroke-width="1.300"/>
<path d="M1169.700 1020H1189.700" stroke="#56b4dc" stroke-width="1.200"/><circle cx="1179.700" cy="1020" r="2.300" fill="#41a9d6"/>
<text x="1194.700" y="1022.600" font-size="12" fill="#222" textLength="79.800" lengthAdjust="spacing">Total Raw Feed</text>
</svg>

<div class="card" style="left:1344px;top:187px;width:491px;height:321px"><div class="ch" style="height:35px"></div><div class="ct" style="left:14px;top:10.2px;font-size:17.5px;letter-spacing:0.32px">GAS CONSUMPTION</div></div>
<svg style="left:0;top:0" width="1920" height="1080" viewBox="0 0 1920 1080">
<defs><linearGradient id="gr" x1="0" y1="0" x2="0" y2="1"><stop offset="0" stop-color="#828282"/><stop offset=".35" stop-color="#5f6d73"/><stop offset="1" stop-color="#193f54"/></linearGradient></defs>
<circle cx="1459" cy="332" r="94.800" fill="#fff" stroke="url(#gr)" stroke-width="8.400"/><path d="M1400.66 390.34A82.5 82.5 0 0 1 1420.85 258.85" fill="none" stroke="#41a9d8" stroke-width="5"/><path d="M1425.05 256.81A82.5 82.5 0 0 1 1525.74 283.51" fill="none" stroke="#fbab00" stroke-width="5"/><path d="M1528.17 287.03A82.5 82.5 0 0 1 1517.34 390.34" fill="none" stroke="#ee2f38" stroke-width="5"/><path d="M1408.09 382.91L1400.66 390.34M1389.10 354.71L1384.82 356.10M1387.89 320.74L1377.52 319.09M1399.54 288.80L1395.90 286.15M1426.31 267.85L1421.55 258.49M1459.00 258.50L1459.00 254.00M1491.69 267.85L1496.45 258.49M1518.46 288.80L1522.10 286.15M1530.11 320.74L1540.48 319.09M1528.90 354.71L1533.18 356.10M1509.91 382.91L1517.34 390.34" stroke="#8a8a8a" stroke-width="1" fill="none"/><g font-size="11" fill="#7b7b7b" transform="translate(0 -1.300)"><text x="1415.5" y="379.3" text-anchor="middle">100</text><text x="1398.3" y="326.2" text-anchor="middle">120</text><text x="1431.1" y="281.0" text-anchor="middle">140</text><text x="1486.9" y="281.0" text-anchor="middle">160</text><text x="1519.7" y="326.2" text-anchor="middle">180</text><text x="1502.5" y="379.3" text-anchor="middle">200</text></g><g transform="translate(1459 332) rotate(135.00)"><circle cx="0" cy="0" r="5.600" fill="#3fa7d6"/><path d="M0 -49L3.600 4L0 8.500L-3.600 4Z" fill="#5fb7de"/><path d="M0 -49L-3.600 4L0 8.500Z" fill="#9fd5ec"/></g><circle cx="1714" cy="332" r="94.800" fill="#fff" stroke="url(#gr)" stroke-width="8.400"/><path d="M1655.66 390.34A82.5 82.5 0 0 1 1712.70 249.51" fill="none" stroke="#41a9d8" stroke-width="5"/><path d="M1715.94 249.52A82.5 82.5 0 0 1 1790.22 300.43" fill="none" stroke="#fbab00" stroke-width="5"/><path d="M1791.29 303.14A82.5 82.5 0 0 1 1772.34 390.34" fill="none" stroke="#ee2f38" stroke-width="5"/><path d="M1663.09 382.91L1655.66 390.34M1646.09 360.13L1641.94 361.85M1642.00 332.00L1631.50 332.00M1646.09 303.87L1641.94 302.15M1663.09 281.09L1655.66 273.66M1685.87 264.09L1684.15 259.94M1714.00 260.00L1714.00 249.50M1742.13 264.09L1743.85 259.94M1764.91 281.09L1772.34 273.66M1781.91 303.87L1786.06 302.15M1786.00 332.00L1796.50 332.00M1781.91 360.13L1786.06 361.85M1764.91 382.91L1772.34 390.34" stroke="#8a8a8a" stroke-width="1" fill="none"/><g font-size="11" fill="#7b7b7b" transform="translate(0 -1.300)"><text x="1670.5" y="379.3" text-anchor="middle">0</text><text x="1652.5" y="335.8" text-anchor="middle">20</text><text x="1670.5" y="292.3" text-anchor="middle">40</text><text x="1714.0" y="274.3" text-anchor="middle">60</text><text x="1757.5" y="292.3" text-anchor="middle">80</text><text x="1775.5" y="335.8" text-anchor="middle">100</text><text x="1757.5" y="379.3" text-anchor="middle">120</text></g><g transform="translate(1714 332) rotate(34.42)"><circle cx="0" cy="0" r="5.600" fill="#3fa7d6"/><path d="M0 -49L3.600 4L0 8.500L-3.600 4Z" fill="#5fb7de"/><path d="M0 -49L-3.600 4L0 8.500Z" fill="#9fd5ec"/></g></svg>
<div class="t" style="left:1394px;top:446.600px;font-size:17.500px;color:#1d4357;-webkit-text-stroke:.35px #1d4357;letter-spacing:-.41px">TG GAS FLOW</div>
<div class="t ye" style="left:1418px;top:470.300px;font-size:16px;-webkit-text-stroke:.2px #f5a31c;letter-spacing:.38px">202.5 M³/h</div>
<div class="t" style="left:1649.500px;top:446.600px;font-size:17.500px;color:#1d4357;-webkit-text-stroke:.35px #1d4357;letter-spacing:-.41px">PG GAS FLOW</div>
<div class="t ye" style="left:1677.500px;top:470.300px;font-size:16px;-webkit-text-stroke:.2px #f5a31c;letter-spacing:.5px">75.3 M³/h</div>

<div class="card" style="left:1344px;top:528px;width:491px;height:231px"><div class="ch" style="height:40px"></div><div class="ct" style="left:14px;top:14.3px;font-size:17.5px;letter-spacing:-0.05px">DERIVED KPIs</div></div>
<div class="t" style="left:1359px;top:588.0px;font-size:17.500px;color:#1d4357;-webkit-text-stroke:.3px #1d4357;letter-spacing:0.46px">Process Efficiency</div>
<div class="t ye" style="right:117.9px;top:591.6px;font-size:16px;letter-spacing:-0.39px;-webkit-text-stroke:.2px #f5a31c">102.750366 %</div>
<div style="left:1384px;top:618px;width:401px;height:1px;background:#d9dcdf"></div>
<div class="t" style="left:1359px;top:628.0px;font-size:17.500px;color:#1d4357;-webkit-text-stroke:.3px #1d4357;letter-spacing:0.64px">Binder Ratio</div>
<div class="t ye" style="right:117.7px;top:631.6px;font-size:16px;letter-spacing:-0.23px;-webkit-text-stroke:.2px #f5a31c">2.980854 %</div>
<div style="left:1384px;top:658px;width:401px;height:1px;background:#d9dcdf"></div>
<div class="t" style="left:1359px;top:668.0px;font-size:17.500px;color:#1d4357;-webkit-text-stroke:.3px #1d4357;letter-spacing:0.93px">Additive Ratio</div>
<div class="t ye" style="right:117.7px;top:671.6px;font-size:16px;letter-spacing:-0.23px;-webkit-text-stroke:.2px #f5a31c">3.876337 %</div>
<div style="left:1384px;top:698px;width:401px;height:1px;background:#d9dcdf"></div>
<div class="t" style="left:1359px;top:708.0px;font-size:17.500px;color:#1d4357;-webkit-text-stroke:.3px #1d4357;letter-spacing:0.52px">Energy per Ton</div>
<div class="t ye" style="right:117.7px;top:711.6px;font-size:16px;letter-spacing:-0.20px;-webkit-text-stroke:.2px #f5a31c">87.303053 %</div>

<div class="card" style="left:1344px;top:781px;width:491px;height:231px"><div class="ch" style="height:40px"></div><div class="ct" style="left:14px;top:15px;font-size:17.5px;letter-spacing:-0.56px">PELLET OUTPUT</div></div>
<div class="t" style="left:1384px;top:845.700px;font-size:17.500px;color:#1d4357;-webkit-text-stroke:.3px #1d4357;letter-spacing:.66px">Feeder Name</div>
<div class="t" style="left:1574px;top:845.700px;font-size:17.500px;color:#1d4357;-webkit-text-stroke:.3px #1d4357;letter-spacing:-.2px">TPH</div>
<div class="t" style="left:1714.500px;top:845.700px;font-size:17.500px;color:#1d4357;-webkit-text-stroke:.3px #1d4357;letter-spacing:.6px">Flow</div>
<div style="left:1384px;top:871px;width:401px;height:1px;background:#d9dcdf"></div>
<div class="t" style="left:1409px;top:886.100px;font-size:17.500px;color:#1d4357;-webkit-text-stroke:.3px #1d4357;letter-spacing:.25px">WF - 10</div>
<div class="t" style="left:1577.500px;top:885.200px;font-size:15.500px;color:#3fa9d5;letter-spacing:-.75px">156</div>
<div style="left:1674px;top:887px;width:130px;height:12px;background:#d4ecf7"><div style="left:0;top:0;width:101px;height:12px;background:#41acd6"></div></div>
<div style="left:1384px;top:916px;width:401px;height:1px;background:#d9dcdf"></div>
<div class="t" style="left:1409px;top:936px;font-size:17.500px;color:#1d4357;-webkit-text-stroke:.3px #1d4357;letter-spacing:.25px">WF - 11</div>
<div class="t" style="left:1577.500px;top:935.100px;font-size:15.500px;color:#3fa9d5;letter-spacing:-.75px">162</div>
<div style="left:1674px;top:937px;width:130px;height:12px;background:#d4ecf7"><div style="left:0;top:0;width:101px;height:12px;background:#41acd6"></div></div>
<div style="left:1384px;top:966px;width:401px;height:1px;background:#d9dcdf"></div>



<div id="vsb"><div style="left:7px;top:21px;width:2px;height:648px;background:#7a7a7a"></div></div>
<div id="hsb"><div style="left:17px;top:8px;width:1323px;height:2px;background:#7a7a7a"></div></div>
<div style="left:289px;top:1041px;width:1631px;height:7px;background:#efefef;border-top:2px solid #fff;border-bottom:1px solid #fff;border-left:1px solid #fff"></div>
<div id="tab"></div>
<div id="tabline"></div>
<svg style="left:303px;top:72.700px" width="20" height="18" viewBox="0 0 20 18">
  <rect x="0.500" y="0.500" width="19" height="13" fill="#fff" stroke="#cfd6da"/>
  <rect x="0" y="13" width="20" height="2" fill="#b9c4c9"/>
  <rect x="8" y="15" width="4" height="2" fill="#9fb0b7"/><rect x="6" y="16.500" width="8" height="1.200" fill="#9fb0b7"/>
  <circle cx="5" cy="7" r="2.200" fill="none" stroke="#e9604e" stroke-width="1.200"/>
  <path d="M5 4.800a2.200 2.200 0 0 1 2.200 2.200" fill="none" stroke="#3aa6d8" stroke-width="1.200"/>
  <path d="M13 10V7M14.600 10V5.500M16.200 10V7.500" stroke="#7d78c9" stroke-width="1"/>
</svg>
<div class="t" style="left:325px;top:73.300px;font-size:16.5px;color:#fff;line-height:19px">Pellete Plant Process</div>
<div class="t" style="left:488.500px;top:71.500px;font-size:20px;color:#fff;line-height:19px">×</div>
<svg style="left:1882px;top:76px" width="32" height="8" viewBox="0 0 32 8"><path d="M0.500 1h9L5 6z" fill="#333"/><path d="M22.500 0.500l7 7M29.500 0.500l-7 7" stroke="#333" stroke-width="1.200"/></svg>


<!-- ============ TOP HEADER ============ -->
<div id="top"></div>
<div class="t" style="left:310px;top:13px;font-size:25px;color:#1b87cf;letter-spacing:.2px;line-height:28px;-webkit-text-stroke:.45px #1b87cf">AdiLogi</div>
<div class="t" style="left:396.500px;top:-.800px;font-family:'Liberation Serif',serif;font-weight:bold;font-size:43px;color:#c97f43;line-height:44px;-webkit-text-stroke:.8px #c97f43;transform:scaleX(1);transform-origin:0 0">X</div>
<div class="t" style="left:435px;top:28px;font-size:10.5px;color:#111;line-height:12px">[v2.5.0]</div>
<div class="t" style="left:310px;top:41px;font-size:13px;color:#111;line-height:15px">Where Industrial Intelligence Meets Interface</div>
<div class="t" style="left:1491px;top:24px;font-size:14.5px;color:#111;line-height:17px;letter-spacing:-.08px">Tuesday, 10 Mar 2026 - 01:02:21 PM</div>
<svg style="left:1760px;top:11px" width="32" height="32" viewBox="0 0 32 32">
  <circle cx="16" cy="16" r="16" fill="#1672de"/>
  <path d="M16 6.2c-.9 0-1.6.6-1.7 1.4-2.7.8-4.4 3.200-4.400 6.300 0 2.500-.5 4.200-1.200 5.400-.7 1.100-1.700 1.700-2.600 2.200-.5.300-.3 1 .2 1.100 2.700.700 5.700 1 8.300 1.100.200.900.800 1.300 1.400 1.300s1.200-.4 1.400-1.300c2.600-.1 5.600-.4 8.300-1.100.5-.1.700-.8.200-1.100-.9-.5-1.900-1.100-2.600-2.200-.7-1.200-1.200-2.900-1.200-5.400 0-3.100-1.700-5.500-4.400-6.300-.1-.8-.8-1.400-1.700-1.400z" fill="#fff"/>
  <path d="M8.300 21.600c2.200-.5 4.500-.8 6.300-.9v.9z M23.700 21.600c-2.200-.5-4.500-.8-6.300-.9v.9z" fill="#1672de"/>
</svg>
<div style="left:1802px;top:10px;width:32px;height:32px;background:#40e0d0">
  <div style="left:4px;top:5px;width:24px;height:21px;border:1.5px solid #fff"></div>
  <div style="left:10px;top:18px;width:13px;height:2px;background:#eafffb"></div>
</div>
<div style="left:1841px;top:10px;width:32px;height:32px;background:#6b9fff">
  <div style="left:4px;top:5px;width:24px;height:21px;border:1.5px solid #fff"></div>
  <div style="left:8px;top:9px;width:16px;height:13px;border:1.5px solid #fff;border-top-width:1.5px"></div>
  <div style="left:9px;top:12px;width:14px;height:1.2px;background:#fff"></div>
</div>
<div style="left:1879px;top:10px;width:32px;height:32px;background:#e8566f">
  <svg style="left:0;top:0" width="32" height="32" viewBox="0 0 32 32"><path d="M7 7L25 25M25 7L7 25" stroke="#fff" stroke-width="5" stroke-linecap="round" fill="none"/><path d="M7 7L25 25M25 7L7 25" stroke="#e8566f" stroke-width="2.600" stroke-linecap="round" fill="none"/></svg>
</div>


<!-- ============ SIDEBAR ============ -->
<div id="side">
  <svg style="left:0;top:0" width="180" height="70" viewBox="0 0 180 70">
  <defs>
    <linearGradient id="lgb" x1="0" y1="1" x2="1" y2="0">
      <stop offset="0" stop-color="#1d5f99"/><stop offset=".18" stop-color="#2b78b8"/><stop offset=".3" stop-color="#bfe1f5"/><stop offset=".42" stop-color="#2d8fd6"/><stop offset=".62" stop-color="#1a7cc7"/><stop offset=".8" stop-color="#3aa3e6"/><stop offset="1" stop-color="#2c97dd"/>
    </linearGradient>
    <linearGradient id="lgb2" x1="0" y1="1" x2="1" y2="0">
      <stop offset="0" stop-color="#24507f"/><stop offset=".35" stop-color="#2f7fbe"/><stop offset=".55" stop-color="#d4ecfa"/><stop offset=".7" stop-color="#2b8bd0"/><stop offset="1" stop-color="#1b78c2"/>
    </linearGradient>
    <linearGradient id="lgo" x1="0" y1="0" x2="0" y2="1">
      <stop offset="0" stop-color="#d07a2c"/><stop offset=".3" stop-color="#bd7d4c"/><stop offset=".6" stop-color="#e89a4d"/><stop offset="1" stop-color="#e58a2e"/>
    </linearGradient>
    <radialGradient id="lgball" cx=".4" cy=".35" r=".7"><stop offset="0" stop-color="#ffd9a8"/><stop offset=".5" stop-color="#f08422"/><stop offset="1" stop-color="#d9600f"/></radialGradient>
  </defs>
  <circle cx="26.400" cy="8.900" r="3.300" fill="url(#lgball)"/>
  <path d="M33 14 C22 16.500 5 38 1.200 54 C0 59.500 3 62 7.500 60.200 C6 51 17 31 30 26.800 L41 28.200 C40.500 21 37.500 14.500 33 14 Z" fill="url(#lgb)"/>
  <path d="M3.500 58 C13 51 27 40.500 38.500 38.600 L40.500 41.600 C30 44 17 53.500 8 61 C5 62 3 60.500 3.500 58 Z" fill="url(#lgb2)"/>
  <path d="M38.500 39.200 C47 36.500 57.500 41 57 50 C56.700 55 55 58.500 53.500 60" fill="none" stroke="#2b90da" stroke-width="1.700"/>
  <path d="M30 26.500 C35.500 32 38.500 43 41.500 51 C44 58.500 48.500 63.500 55.500 61.300 L55 56.500 C50 58.200 47.200 54 45.600 47.500 C44 40 43.500 32.500 40.600 27.800 Z" fill="url(#lgo)"/>
  <text x="61.300" y="50.200" font-size="38.500" fill="#1c8bd6" stroke="#1c8bd6" stroke-width=".5" letter-spacing=".1">Adi</text>
  <text x="118" y="50.200" font-size="38.500" fill="#cf7f40" stroke="#cf7f40" stroke-width=".5" letter-spacing=".2">Infi</text>
  <circle cx="167.800" cy="13.400" r="4" fill="none" stroke="#d8dbe0" stroke-width=".8"/>
  <text x="167.800" y="15.600" font-size="6" fill="#d8dbe0" text-anchor="middle">R</text>
</svg>
<div style="left:242px;top:26.500px;width:26.500px;height:3px;background:#fff;border-radius:1.500px"></div>
<div style="left:242px;top:34.500px;width:26.500px;height:3px;background:#fff;border-radius:1.500px"></div>
<div style="left:242px;top:42.500px;width:26.500px;height:3px;background:#fff;border-radius:1.500px"></div>

  <svg style="left:12px;top:77px" width="34" height="34" viewBox="0 0 34 34"><rect x="1" y="3.500" width="32" height="20" fill="#fff"/><rect x="1" y="3.500" width="32" height="20" fill="none" stroke="#dfe6ea" stroke-width="1"/>
<rect x="1" y="23.500" width="32" height="3.200" fill="#c9d3d8"/><path d="M13.500 26.700h7l1 4.300h-9z" fill="#b4c1c7"/><rect x="10" y="31" width="14" height="1.600" fill="#a9b7be"/>
<circle cx="9.300" cy="14.500" r="3.300" fill="none" stroke="#f0653f" stroke-width="1.600"/><path d="M9.300 11.200a3.300 3.300 0 0 1 3.300 3.300" fill="none" stroke="#2fa6dd" stroke-width="1.600"/><path d="M6 14.500a3.300 3.300 0 0 1 1-2.300" fill="none" stroke="#f4b73a" stroke-width="1.600"/>
<path d="M15.500 13h4M15.500 15.500h4M15.500 18h4" stroke="#e6eaed" stroke-width="1"/><path d="M5 8h6" stroke="#e6eaed" stroke-width="1"/>
<path d="M23.500 19v-4.500M25.700 19v-8M27.900 19v-5" stroke="#ee6a8a" stroke-width="1.300"/><path d="M24.600 19v-3M26.800 19v-6.500M29 19v-3.500" stroke="#3e9ad6" stroke-width="1"/></svg>
<div class="mi" style="top:87px;letter-spacing:-0.17px">Dashboards</div>
<svg style="left:12px;top:127px" width="34" height="34" viewBox="0 0 34 34"><rect x="1.500" y="4.500" width="27" height="22" rx="1.500" fill="#e9edf2" stroke="#f7f9fb" stroke-width="1"/><rect x="1.500" y="4.500" width="27" height="4" fill="#fbfcfd"/>
<circle cx="3.800" cy="6.500" r=".7" fill="#f26b5e"/><circle cx="6" cy="6.500" r=".7" fill="#f6c04a"/>
<rect x="4" y="11" width="15" height="13" fill="#dfe5ec"/><path d="M5.500 14h6M5.500 17h4M5.500 20h5" stroke="#c4ccd6" stroke-width="1.200"/>
<polygon points="32.46,21.68 32.46,23.32 30.94,23.50 30.72,24.61 32.06,25.36 31.43,26.88 29.95,26.46 29.32,27.40 30.27,28.61 29.11,29.77 27.90,28.82 26.96,29.45 27.38,30.93 25.86,31.56 25.11,30.22 24.00,30.44 23.82,31.96 22.18,31.96 22.00,30.44 20.89,30.22 20.14,31.56 18.62,30.93 19.04,29.45 18.10,28.82 16.89,29.77 15.73,28.61 16.68,27.40 16.05,26.46 14.57,26.88 13.94,25.36 15.28,24.61 15.06,23.50 13.54,23.32 13.54,21.68 15.06,21.50 15.28,20.39 13.94,19.64 14.57,18.12 16.05,18.54 16.68,17.60 15.73,16.39 16.89,15.23 18.10,16.18 19.04,15.55 18.62,14.07 20.14,13.44 20.89,14.78 22.00,14.56 22.18,13.04 23.82,13.04 24.00,14.56 25.11,14.78 25.86,13.44 27.38,14.07 26.96,15.55 27.90,16.18 29.11,15.23 30.27,16.39 29.32,17.60 29.95,18.54 31.43,18.12 32.06,19.64 30.72,20.39 30.94,21.50" fill="#7e8aa3"/><circle cx="23" cy="22.500" r="7.200" fill="#8d98b0"/><circle cx="23" cy="22.500" r="3.700" fill="#262a36"/></svg>
<div class="mi" style="top:137px;letter-spacing:-0.05px">Control Forms</div>
<svg style="left:12px;top:177px" width="34" height="34" viewBox="0 0 34 34"><rect x="2" y="3" width="30" height="30" rx="9" fill="#c9cdd3"/><rect x="12" y="1" width="10" height="4" rx="1.500" fill="#bfc4cb"/><rect x="12" y="31" width="10" height="3" rx="1.500" fill="#bfc4cb"/>
<rect x="7" y="1.500" width="19" height="30" fill="#fbfbfc" stroke="#e1e4e8" stroke-width=".6"/>
<circle cx="12" cy="7" r="3.200" fill="#e9573f"/><path d="M12 7V3.800A3.200 3.200 0 0 1 15.200 7z" fill="#f6bb42"/><path d="M12 7h3.200a3.200 3.200 0 0 1-2 2.950z" fill="#48a868"/>
<path d="M17.500 5h6M17.500 7h6M17.500 9h6" stroke="#9aa3ad" stroke-width="1"/><path d="M9 13h15M9 15.500h15M9 18h15" stroke="#aab2bb" stroke-width="1"/>
<rect x="9.500" y="21" width="14" height="8.500" fill="#fff" stroke="#8a939e" stroke-width=".7"/><path d="M11 27.500l2-1.800 1.500 1 2-2 1.500 1.200 2.500-2.800 1.500.8" fill="none" stroke="#555e69" stroke-width=".8"/></svg>
<div class="mi" style="top:187px;letter-spacing:-0.06px">Reports</div>
<svg style="left:12px;top:227px" width="34" height="34" viewBox="0 0 34 34"><path d="M1.500 1.500V32.500H33" fill="none" stroke="#a9a9a9" stroke-width="1"/>
<path d="M2 31.500C8 31 9 9.500 14.500 9.500C20 9.500 20 27 33 29" fill="none" stroke="#8e44ad" stroke-width="1.500"/>
<path d="M2 31.800C11 31 13 12.500 18.500 12.500C24 12.500 24 27.500 33 29.500" fill="none" stroke="#f08a24" stroke-width="1.500"/>
<path d="M4 32C15 32 16.500 5.500 23 5.500C29 5.500 28 25 33 27" fill="none" stroke="#f7d038" stroke-width="1.500"/></svg>
<div class="mi" style="top:237px;letter-spacing:0.15px">Trending Data</div>
<svg style="left:12px;top:277px" width="34" height="34" viewBox="0 0 34 34"><circle cx="17" cy="8" r="7" fill="#f2f2f2"/><path d="M17 15v5.500M17 20.500l-6.500 4M17 20.500l6.500 4" stroke="#e6e6e6" stroke-width="1.200" fill="none"/>
<circle cx="6.500" cy="23.500" r="2.600" fill="#f2f2f2"/><path d="M1 33.500v-3.200c0-2 2-3.300 5.500-3.300s5.500 1.300 5.500 3.300v3.200z" fill="#f2f2f2"/><path d="M6.500 27.500l-1.500 4 1.500 1.500 1.500-1.500z" fill="#262a36"/>
<circle cx="27.500" cy="23.500" r="2.600" fill="#f2f2f2"/><path d="M22 33.500v-3.200c0-2 2-3.300 5.500-3.300s5.500 1.300 5.500 3.300v3.200z" fill="#f2f2f2"/><path d="M27.500 27.500l-1.500 4 1.500 1.500 1.500-1.500z" fill="#262a36"/></svg>
<div class="mi" style="top:287px;letter-spacing:0.32px">Role Management</div>
<svg style="left:12px;top:327px" width="34" height="34" viewBox="0 0 34 34"><circle cx="17" cy="17" r="16.300" fill="#fff"/><circle cx="17" cy="11.500" r="3.800" fill="#b9b9b9"/>
<path d="M8.500 25.500v-3.500c0-2.500 3-4.500 8.500-4.500s8.500 2 8.500 4.500v3.500z" fill="#2d2d2d"/><path d="M14.300 17.700h5.400l-2.700 6.800z" fill="#fff"/><path d="M15.600 17.700h2.800l-1.400 5.300z" fill="#e51c23"/></svg>
<div class="mi" style="top:337px;letter-spacing:0.27px">User Management</div>
<svg style="left:12px;top:377px" width="34" height="34" viewBox="0 0 34 34"><path d="M7 21l-5.500 12.500 5.500-1.500 3 5 4.500-12z" fill="#f5b400"/><path d="M27 21l5.500 12.500-5.500-1.500-3 5-4.500-12z" fill="#f5b400"/>
<circle cx="17" cy="12.800" r="15" fill="#f5b400"/><circle cx="17" cy="12.800" r="11.500" fill="#262a36"/><circle cx="17" cy="12.800" r="10.500" fill="#fbc02d"/><circle cx="17" cy="11.500" r="7" fill="#fdd264" opacity=".6"/>
<text x="17" y="14.500" font-size="5.400" font-weight="bold" fill="#fff" text-anchor="middle">21 CFR</text></svg>
<div class="mi" style="top:387px;letter-spacing:-0.1px">21 CFR Part 11</div>
<svg style="left:12px;top:427px" width="34" height="34" viewBox="0 0 34 34"><rect x="19" y="6" width="14" height="20" rx="1.500" fill="#cfe0f7"/><rect x="1" y="1.500" width="21" height="25" fill="#dbe9fb"/><rect x="1" y="1.500" width="21" height="2.500" fill="#e91e63"/>
<rect x="1" y="26.500" width="32" height="3.500" rx="1" fill="#42a5f5"/><path d="M12 30h10l1 2.700H11z" fill="#e91e63"/><rect x="7.500" y="32.700" width="19" height=".8" fill="#1e88e5"/>
<circle cx="11.500" cy="9.500" r="4.500" fill="#ffccbc"/><path d="M7 8.500c0-3.500 2-5 4.500-5s4.500 1.500 4.500 5c-1.500-1.800-7.500-1.800-9 0z" fill="#37474f"/>
<path d="M4.500 20c0-4 3-5.500 7-5.500s7 1.500 7 5.500z" fill="#ff9800"/><path d="M9.500 14.500h4l-2 3z" fill="#fff"/>
<rect x="3" y="21" width="17" height="4.500" fill="#c5d9f2"/><path d="M4.500 22.500h9M4.500 24.200h6" stroke="#9db7d8" stroke-width=".8"/>
<polygon points="33.20,17.33 33.20,19.67 31.54,19.79 30.98,21.15 32.06,22.41 30.41,24.06 29.15,22.98 27.79,23.54 27.67,25.20 25.33,25.20 25.21,23.54 23.85,22.98 22.59,24.06 20.94,22.41 22.02,21.15 21.46,19.79 19.80,19.67 19.80,17.33 21.46,17.21 22.02,15.85 20.94,14.59 22.59,12.94 23.85,14.02 25.21,13.46 25.33,11.80 27.67,11.80 27.79,13.46 29.15,14.02 30.41,12.94 32.06,14.59 30.98,15.85 31.54,17.21" fill="#4caf50"/><circle cx="26.500" cy="18.500" r="2.600" fill="#b9c6f2"/></svg>
<div class="mi" style="top:437px;letter-spacing:-0.08px">Account Settings</div>
<svg style="left:12px;top:477px" width="34" height="34" viewBox="0 0 34 34"><circle cx="17" cy="4.500" r="2.600" fill="#b3c7f7"/><circle cx="17" cy="29.500" r="2.600" fill="#b3c7f7"/><path d="M17 7v3.500M17 23.500v3.500" stroke="#b3c7f7" stroke-width="1.600"/>
<path d="M9.500 6.500l-5 5.500v10l5 5.500" fill="none" stroke="#4285f4" stroke-width="2.600" stroke-linejoin="round"/><path d="M24.500 6.500l5 5.500v10l-5 5.500" fill="none" stroke="#4285f4" stroke-width="2.600" stroke-linejoin="round"/>
<path d="M22 13.200a6.300 6.300 0 1 0 1.300 3.800" fill="none" stroke="#4285f4" stroke-width="2.300"/><path d="M13.800 16.500l2.700 2.700 5.500-6" fill="none" stroke="#4285f4" stroke-width="2.200"/></svg>
<div class="mi" style="top:487px;letter-spacing:0.19px">Audit Trail</div>
<svg style="left:12px;top:528px" width="34" height="34" viewBox="0 0 34 34"><polygon points="33.25,14.16 33.25,19.84 29.40,20.18 28.02,23.52 30.50,26.49 26.49,30.50 23.52,28.02 20.18,29.40 19.84,33.25 14.16,33.25 13.82,29.40 10.48,28.02 7.51,30.50 3.50,26.49 5.98,23.52 4.60,20.18 0.75,19.84 0.75,14.16 4.60,13.82 5.98,10.48 3.50,7.51 7.51,3.50 10.48,5.98 13.82,4.60 14.16,0.75 19.84,0.75 20.18,4.60 23.52,5.98 26.49,3.50 30.50,7.51 28.02,10.48 29.40,13.82" fill="#5f86b5"/><path d="M17 .5A16.500 16.500 0 0 0 17 33.500z" fill="#7d9fc8" opacity=".55"/><circle cx="17" cy="17" r="9.800" fill="#a9c3e0"/><path d="M17 7.200a9.800 9.800 0 0 1 0 19.600z" fill="#8fb0d4"/><circle cx="17" cy="17" r="5.600" fill="#262a36"/></svg>
<div class="mi" style="top:537px;letter-spacing:-0.3px">Settings</div>
<svg style="left:12px;top:578.500px" width="34" height="34" viewBox="0 0 34 34"><rect x="4" y="4" width="21.500" height="26" rx="1.500" fill="#fff"/><rect x="9.500" y="1.500" width="10.500" height="2.800" rx="1" fill="#2f8ff5"/>
<path d="M6 9.500l1.300 1.300 2.400-2.600M6 15l1.300 1.300 2.400-2.600M6 20.500l1.300 1.300 2.400-2.600M6 26l1.300 1.300 2.400-2.600" fill="none" stroke="#263238" stroke-width="1.100"/>
<path d="M12 9.500h11M12 11.500h11M12 15h8M12 17h6M12 20.500h7M12 22.500h5M12 26h5" stroke="#263238" stroke-width="1.300"/>
<circle cx="25.500" cy="25.500" r="5.600" fill="#2196f3"/><path d="M25.500 22.200v3.500l2.400 1.600" fill="none" stroke="#fff" stroke-width="1.300"/></svg>
<div class="mi" style="top:587px;letter-spacing:0.11px">Scheduled Report</div>
<svg style="left:9px;top:994px" width="24" height="24" viewBox="0 0 24 24"><circle cx="12" cy="12" r="11.300" fill="none" stroke="#d6365a" stroke-width="1"/><path d="M8.600 8.800c0-2.200 1.500-3.600 3.500-3.600s3.400 1.300 3.400 3.200c0 2.700-3.400 3-3.400 6" fill="none" stroke="#d6365a" stroke-width="1"/><circle cx="12" cy="17.800" r="1.200" fill="none" stroke="#d6365a" stroke-width=".9"/></svg>
<div class="mi" style="left:44px;top:998.500px;letter-spacing:0.12px">Help</div>
<svg style="left:9px;top:1046px" width="26" height="20" viewBox="0 0 26 20"><path d="M15.500 6V3.500a2.500 2.500 0 0 0-2.500-2.500H3.500A2.500 2.500 0 0 0 1 3.500v13A2.500 2.500 0 0 0 3.500 19H13a2.500 2.500 0 0 0 2.500-2.500V14" fill="none" stroke="#d6365a" stroke-width="1.300"/><path d="M10 10h13.500M19 5.500l4.500 4.500-4.500 4.500" fill="none" stroke="#d6365a" stroke-width="1.300"/></svg>
<div class="mi" style="left:44px;top:1048.500px;letter-spacing:-0.27px">Exit</div>

</div>
<div id="status">
  <svg style="left:1546px;top:8px" width="18" height="17" viewBox="0 0 18 17"><path d="M9 .8c-.7 0-1.200.4-1.300 1C5.200 2.500 3.800 4.700 3.800 7.300c0 3.200-1 4.500-2.800 5.600-.5.300-.3 1 .2 1.100 2 .5 4.300.8 6.400.9.200.8.800 1.200 1.400 1.200s1.200-.4 1.400-1.200c2.100-.1 4.400-.4 6.400-.9.500-.1.700-.8.200-1.100-1.800-1.100-2.800-2.400-2.800-5.600 0-2.600-1.400-4.800-3.900-5.500-.1-.6-.6-1-1.300-1z" fill="#e04a4a"/><path d="M2.500 13.200c1.700-.4 3.600-.6 5.200-.7v.8zM15.500 13.200c-1.700-.4-3.600-.6-5.200-.7v.8z" fill="#262a36"/></svg>
<div class="t" style="left:1567px;top:9.500px;font-size:12.500px;color:#fff;line-height:14px;letter-spacing:-.1px">Alarms</div>
</div>

</body></html>
